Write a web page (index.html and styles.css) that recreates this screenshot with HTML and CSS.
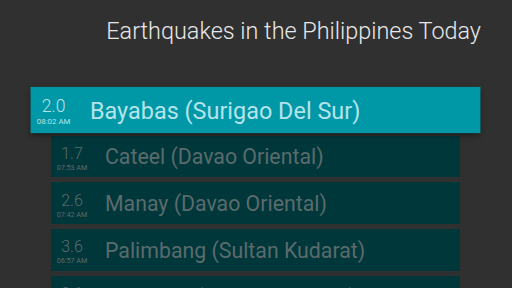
FILE: index.html
```html
<!DOCTYPE html>
<html lang="en">
<head>
  <meta charset="UTF-8" />
  <title>Earthquakes PH</title>
  <link rel="stylesheet" href="styles.css">
</head>
<body>

  <div class="header">
    <h1 class="title">Earthquakes in the Philippines Today</h1>
  </div>

  <div class="quake-list">
    <div class="quake focused">
      <div class="mag">
        <span class="mag-value">2.0</span>
        <span class="mag-time">08:02 AM</span>
      </div>
      <div class="place">Bayabas (Surigao Del Sur)</div>
    </div>
    <div class="quake">
      <div class="mag">
        <span class="mag-value">1.7</span>
        <span class="mag-time">07:53 AM</span>
      </div>
      <div class="place">Cateel (Davao Oriental)</div>
    </div>
    <div class="quake">
      <div class="mag">
        <span class="mag-value">2.6</span>
        <span class="mag-time">07:42 AM</span>
      </div>
      <div class="place">Manay (Davao Oriental)</div>
    </div>
    <div class="quake">
      <div class="mag">
        <span class="mag-value">3.6</span>
        <span class="mag-time">06:57 AM</span>
      </div>
      <div class="place">Palimbang (Sultan Kudarat)</div>
    </div>
    <div class="quake">
      <div class="mag">
        <span class="mag-value">2.1</span>
        <span class="mag-time">06:31 AM</span>
      </div>
      <div class="place">Hinatuan (Surigao Del Sur)</div>
    </div>
  </div>

</body>
</html>
```

FILE: styles.css
```css
html, body {
  height: 100%;
}

body {
  margin: 0;
  background-color: #303030;
  font-family: Roboto, "Noto Sans", sans-serif;
  overflow: hidden;
}

.header {
  display: flex;
  justify-content: flex-end;
  padding: 15px 31px 0 0;
  height: 75px;
  box-sizing: border-box;
}

.title {
  margin: 0;
  font-size: 23.4px;
  font-weight: 300;
  color: #e8e8e8;
  line-height: 32px;
}

.quake-list {
  display: flex;
  flex-direction: column;
  gap: 5.2px;
  padding: 14px 52px 0 51px;
}

.quake {
  display: flex;
  align-items: center;
  height: 41.5px;
  flex-shrink: 0;
  background-color: #00373b;
  color: #5b6b6c;
}

.quake.focused {
  background-color: #0097a7;
  color: #b4e4ea;
  transform: scale(1.1);
  box-shadow: 0 3px 5px rgba(0, 0, 0, 0.45);
  position: relative;
  z-index: 2;
}

.mag {
  width: 42px;
  display: flex;
  flex-direction: column;
  align-items: center;
  padding-top: 5px;
}

.mag-value {
  font-size: 16px;
  font-weight: 300;
  line-height: 17px;
}

.mag-time {
  font-size: 7.2px;
  line-height: 10px;
  padding-top: 1px;
}

.place {
  margin-left: 12px;
  padding-top: 2px;
  font-size: 21.3px;
  line-height: 24px;
}
```
